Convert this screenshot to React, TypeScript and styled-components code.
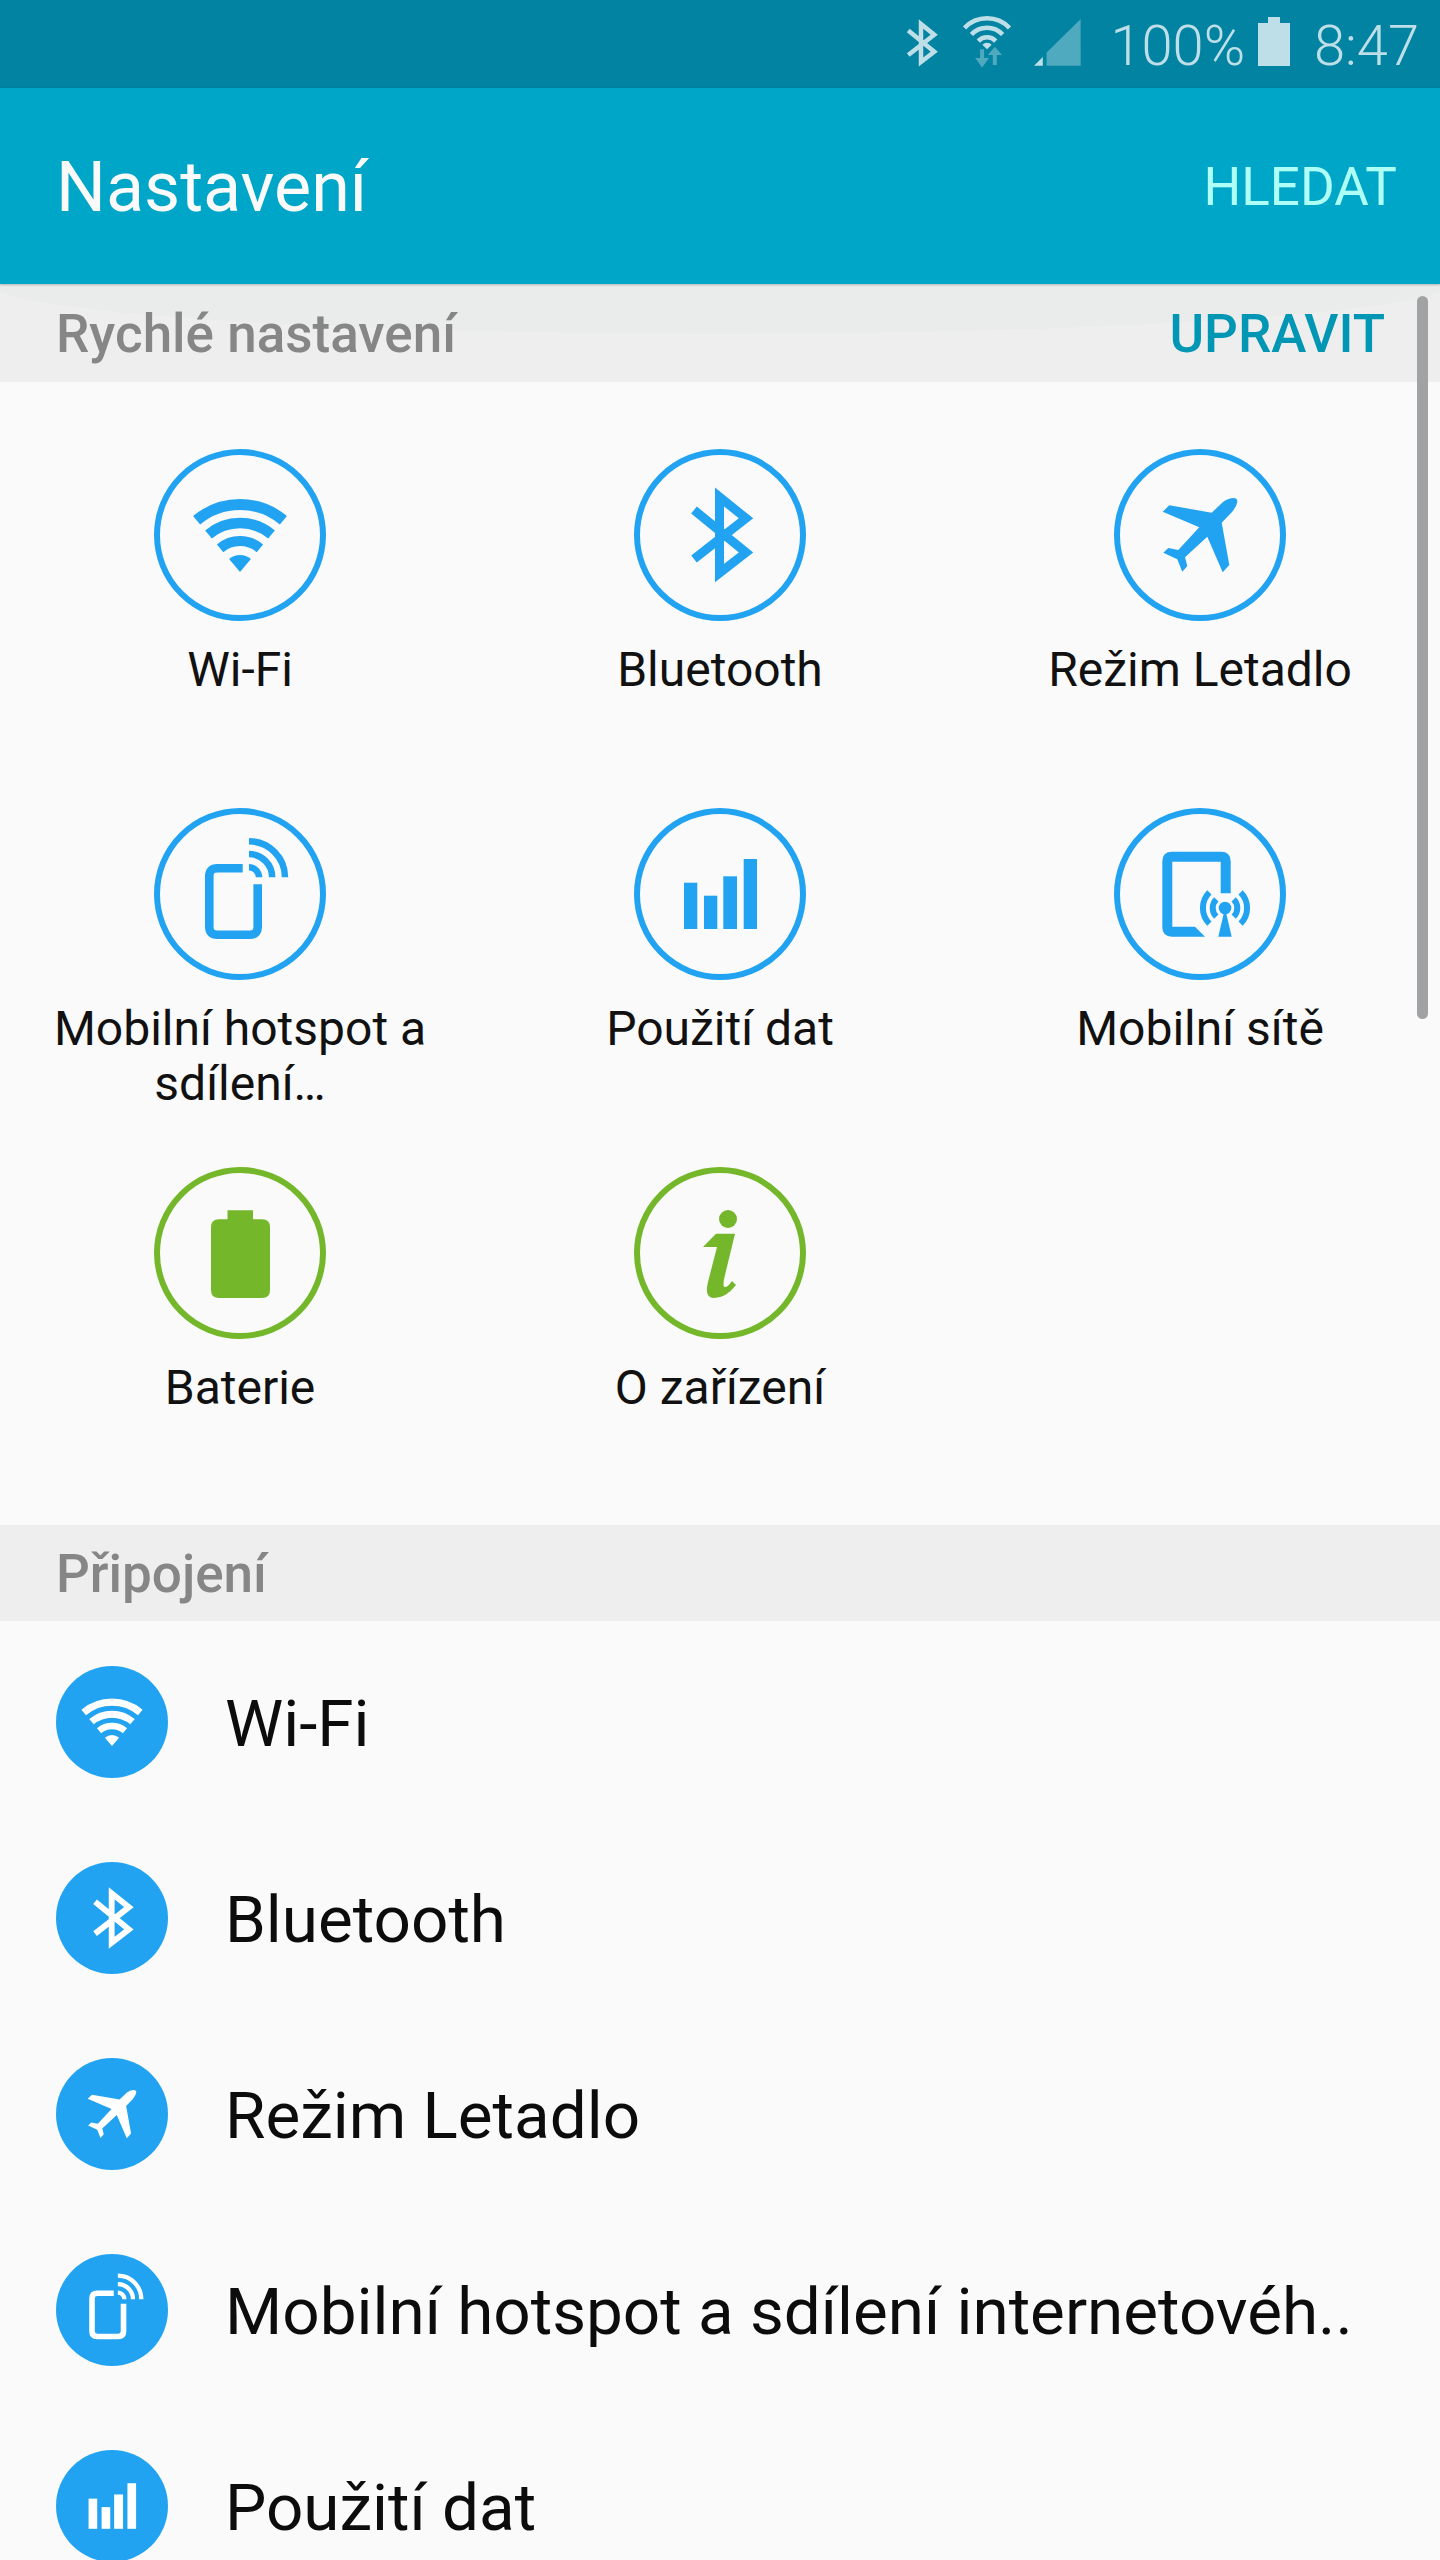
import React from "react";
import styled, { createGlobalStyle } from "styled-components";

const BLUE = "#21a3f1";
const GREEN = "#74b72b";
const STATUS_LIGHT = "#bfdfe8";
const STATUS_DIM = "#4fa9bf";

const GlobalStyle = createGlobalStyle`
  html, body {
    margin: 0;
    padding: 0;
    background: #fafafa;
  }
  * {
    box-sizing: border-box;
  }
`;

// every settings icon is drawn on the 172px ring, the list circles just scale it down
const WifiIcon = () => (
  <g>
    <g fill="none" stroke="currentColor">
      <path d="M42.6 71.3A67.5 67.5 0 0 1 129.4 71.3" strokeWidth="11" />
      <path d="M54.5 85.5A49 49 0 0 1 117.5 85.5" strokeWidth="10.5" />
      <path d="M66.1 99.3A31 31 0 0 1 105.9 99.3" strokeWidth="10" />
    </g>
    <path d="M86 123L75.1 110A17 17 0 0 1 96.9 110Z" fill="currentColor" />
  </g>
);

const BluetoothIcon = () => (
  <path
    d="M60 61L112 103.5L85.5 124V48L112 69.3L60 110"
    fill="none"
    stroke="currentColor"
    strokeWidth="9"
  />
);

const PlaneIcon = () => (
  <path
    d="M109.3 52.7Q115 49 119.3 49Q123.6 49 123.3 53Q122.8 57 118 63L107.7 73.7L115.3 116L108.7 123.3L93.3 87.7L71 108.3L73.3 117L68.3 122.7L63.3 110.3L49.3 103.7L54.3 99L64.3 101L85.3 78.3L48.7 62.7L55.3 56.3L97.7 63.7Z"
    fill="currentColor"
  />
);

const HotspotIcon = () => (
  <g fill="none" stroke="currentColor">
    <path
      d="M88.7 60.3H63.3Q55.3 60.3 55.3 68.3V118.7Q55.3 126.7 63.3 126.7H95.7Q103.7 126.7 103.7 118.7V76.3"
      strokeWidth="8.6"
    />
    <path d="M95 33.3A36 36 0 0 1 131 69.3" strokeWidth="6.5" />
    <path d="M95 46.1A23.2 23.2 0 0 1 118.2 69.3" strokeWidth="6.5" />
    <path d="M95 59.3A10 10 0 0 1 105 69.3" strokeWidth="6.5" />
  </g>
);

const DataIcon = () => (
  <g fill="currentColor">
    <rect x="50" y="74.7" width="13.3" height="46.3" />
    <rect x="70" y="87.7" width="13.3" height="33.3" />
    <rect x="89.3" y="68.3" width="13.7" height="52.7" />
    <rect x="109.7" y="51" width="13.3" height="70" />
  </g>
);

const NetworkIcon = () => (
  <g>
    <path
      d="M58 43.7H107Q116.7 43.7 116.7 53.4V85.3H106.7V53.7H58.3V118.7H81L91 128.7H58Q48.3 128.7 48.3 119V53.4Q48.3 43.7 58 43.7Z"
      fill="currentColor"
    />
    <circle cx="111" cy="100" r="6.3" fill="currentColor" />
    <path d="M111 100L104.3 128.7H117.7Z" fill="currentColor" />
    <g fill="none" stroke="currentColor" strokeWidth="6">
      <path d="M95.4 84.4A22 22 0 0 0 95.4 115.6" />
      <path d="M126.6 84.4A22 22 0 0 1 126.6 115.6" />
      <path d="M102.3 91.3A12.3 12.3 0 0 0 102.3 108.7" />
      <path d="M119.7 91.3A12.3 12.3 0 0 1 119.7 108.7" />
    </g>
  </g>
);

const BatteryIcon = () => (
  <path
    d="M73.5 43.3H99V52.3H108Q116 52.3 116 60.3V123Q116 131 108 131H65Q57 131 57 123V60.3Q57 52.3 65 52.3H73.5Z"
    fill="currentColor"
  />
);

const InfoIcon = () => (
  <g fill="currentColor">
    <circle cx="94" cy="52" r="9" />
    <path d="M82 66.7H101L91 108Q88 120 91 120Q94 120 98 114L102 118Q92 131 80 131Q70 131 74 115L83 80H69Z" />
  </g>
);

const Root = styled.div`
  position: relative;
  width: 1440px;
  height: 2560px;
  overflow: hidden;
  background: #fafafa;
  font-family: Roboto, "Liberation Sans", sans-serif;
`;

const StatusBar = styled.div`
  display: flex;
  align-items: flex-start;
  justify-content: flex-end;
  height: 88px;
  padding-right: 21px;
  background: #0283a1;
  color: ${STATUS_LIGHT};
`;

const StatusText = styled.span<{ $gap: number }>`
  margin-left: ${(p) => p.$gap}px;
  font-size: 56px;
  font-weight: 300;
  line-height: 66px;
  margin-top: 13px;
`;

const StatusSvg = styled.svg<{ $top: number; $gap: number }>`
  display: block;
  flex: none;
  margin-top: ${(p) => p.$top}px;
  margin-left: ${(p) => p.$gap}px;
`;

const AppBar = styled.header`
  display: flex;
  align-items: center;
  justify-content: space-between;
  height: 196px;
  padding: 2px 43px 0 56px;
  background: #00a6c7;
  box-shadow: 0 1px 2px rgba(0, 0, 0, 0.25);
  position: relative;
  z-index: 1;
`;

const AppTitle = styled.h1`
  margin: 0;
  font-size: 70px;
  font-weight: 400;
  color: #fafafa;
`;

const SearchAction = styled.span`
  font-size: 53px;
  font-weight: 400;
  color: #aefff6;
`;

const SectionHeader = styled.div<{ $glow?: boolean }>`
  display: flex;
  align-items: center;
  justify-content: space-between;
  height: ${(p) => (p.$glow ? 98 : 96)}px;
  padding: 2px 55px 0 56px;
  color: #868686;
  background: ${(p) =>
    p.$glow
      ? "radial-gradient(ellipse 732px 50px at 50% 0, #eaebeb 99%, #eeeeee 100%)"
      : "#eeeeee"};
`;

const SectionTitle = styled.h2`
  margin: 0;
  font-size: 53px;
  font-weight: 500;
`;

const EditAction = styled.span`
  font-size: 53px;
  font-weight: 500;
  color: #0096b4;
`;

const QuickGrid = styled.div`
  display: grid;
  grid-template-columns: repeat(3, 480px);
  grid-auto-rows: 359px;
  padding-bottom: 66px;
`;

const QuickCell = styled.div`
  display: flex;
  flex-direction: column;
  align-items: center;
  padding-top: 67px;
`;

const Ring = styled.div<{ $color: string }>`
  width: 172px;
  height: 172px;
  border: 6px solid ${(p) => p.$color};
  border-radius: 50%;
  color: ${(p) => p.$color};
  flex: none;

  svg {
    display: block;
    margin: -6px;
    width: 172px;
    height: 172px;
  }
`;

const QuickLabel = styled.div`
  width: 400px;
  margin-top: 21px;
  font-size: 48px;
  line-height: 55px;
  text-align: center;
  color: #111111;
`;

const List = styled.div`
  margin-top: 3px;
`;

const Row = styled.div`
  display: flex;
  align-items: center;
  height: 196px;
  padding-left: 56px;
`;

const Disc = styled.div`
  width: 112px;
  height: 112px;
  border-radius: 50%;
  background: ${BLUE};
  color: #ffffff;
  flex: none;

  svg {
    display: block;
    width: 112px;
    height: 112px;
  }
`;

const RowLabel = styled.div`
  margin: 3px 0 0 57px;
  font-size: 65.6px;
  color: #0c0c0c;
  white-space: nowrap;
`;

const ScrollThumb = styled.div`
  position: absolute;
  top: 296px;
  right: 12px;
  width: 11px;
  height: 723px;
  border-radius: 6px;
  background: #a1a2a3;
  z-index: 2;
`;

const quickItems = [
  { label: "Wi-Fi", icon: <WifiIcon />, color: BLUE },
  { label: "Bluetooth", icon: <BluetoothIcon />, color: BLUE },
  { label: "Režim Letadlo", icon: <PlaneIcon />, color: BLUE },
  { label: "Mobilní hotspot a sdílení…", icon: <HotspotIcon />, color: BLUE },
  { label: "Použití dat", icon: <DataIcon />, color: BLUE },
  { label: "Mobilní sítě", icon: <NetworkIcon />, color: BLUE },
  { label: "Baterie", icon: <BatteryIcon />, color: GREEN },
  { label: "O zařízení", icon: <InfoIcon />, color: GREEN },
];

const listItems = [
  { label: "Wi-Fi", icon: <WifiIcon /> },
  { label: "Bluetooth", icon: <BluetoothIcon /> },
  { label: "Režim Letadlo", icon: <PlaneIcon /> },
  { label: "Mobilní hotspot a sdílení internetovéh..", icon: <HotspotIcon /> },
  { label: "Použití dat", icon: <DataIcon /> },
];

function App() {
  return (
    <Root>
      <GlobalStyle />
      <StatusBar>
        <StatusSvg $top={19} $gap={0} width="33" height="48" viewBox="54 38 65 96">
          <BluetoothIcon />
        </StatusSvg>
        <StatusSvg $top={16} $gap={25} width="48" height="52" viewBox="0 0 48 52">
          <g fill="none" stroke="currentColor">
            <path d="M1.5 12A31 31 0 0 1 46.5 12" strokeWidth="4.5" />
            <path d="M8.4 18.5A21.5 21.5 0 0 1 39.6 18.5" strokeWidth="4.5" />
            <path d="M15.3 25.1A12 12 0 0 1 32.7 25.1" strokeWidth="4.5" />
          </g>
          <path d="M24 33.3L19.3 28.8A6.5 6.5 0 0 1 28.7 28.8Z" fill="currentColor" />
          <g fill={STATUS_DIM}>
            <path d="M17.1 33.3H21.1V42H26L19.1 51.5L12.2 42H17.1Z" />
            <path d="M31.8 30.7L39 39H33.8V49H29.8V39H24.9Z" />
          </g>
        </StatusSvg>
        <StatusSvg $top={19} $gap={23} width="47" height="47" viewBox="0 0 47 47">
          <path d="M46.7 0V46.7H12.6V33.4Z" fill={STATUS_DIM} />
          <path d="M0 46.7L8.8 38V46.7Z" fill="currentColor" />
        </StatusSvg>
        <StatusText $gap={29}>100%</StatusText>
        <StatusSvg $top={17} $gap={13} width="32" height="49" viewBox="0 0 32 49">
          <path d="M10 0H22V6H32V49H0V6H10Z" fill="currentColor" />
        </StatusSvg>
        <StatusText $gap={24}>8:47</StatusText>
      </StatusBar>

      <AppBar>
        <AppTitle>Nastavení</AppTitle>
        <SearchAction>HLEDAT</SearchAction>
      </AppBar>

      <SectionHeader $glow>
        <SectionTitle>Rychlé nastavení</SectionTitle>
        <EditAction>UPRAVIT</EditAction>
      </SectionHeader>

      <QuickGrid>
        {quickItems.map((item) => (
          <QuickCell key={item.label}>
            <Ring $color={item.color}>
              <svg viewBox="0 0 172 172">{item.icon}</svg>
            </Ring>
            <QuickLabel>{item.label}</QuickLabel>
          </QuickCell>
        ))}
      </QuickGrid>

      <SectionHeader>
        <SectionTitle>Připojení</SectionTitle>
      </SectionHeader>

      <List>
        {listItems.map((item) => (
          <Row key={item.label}>
            <Disc>
              <svg viewBox="0 0 172 172">{item.icon}</svg>
            </Disc>
            <RowLabel>{item.label}</RowLabel>
          </Row>
        ))}
      </List>

      <ScrollThumb />
    </Root>
  );
}

export default App;
